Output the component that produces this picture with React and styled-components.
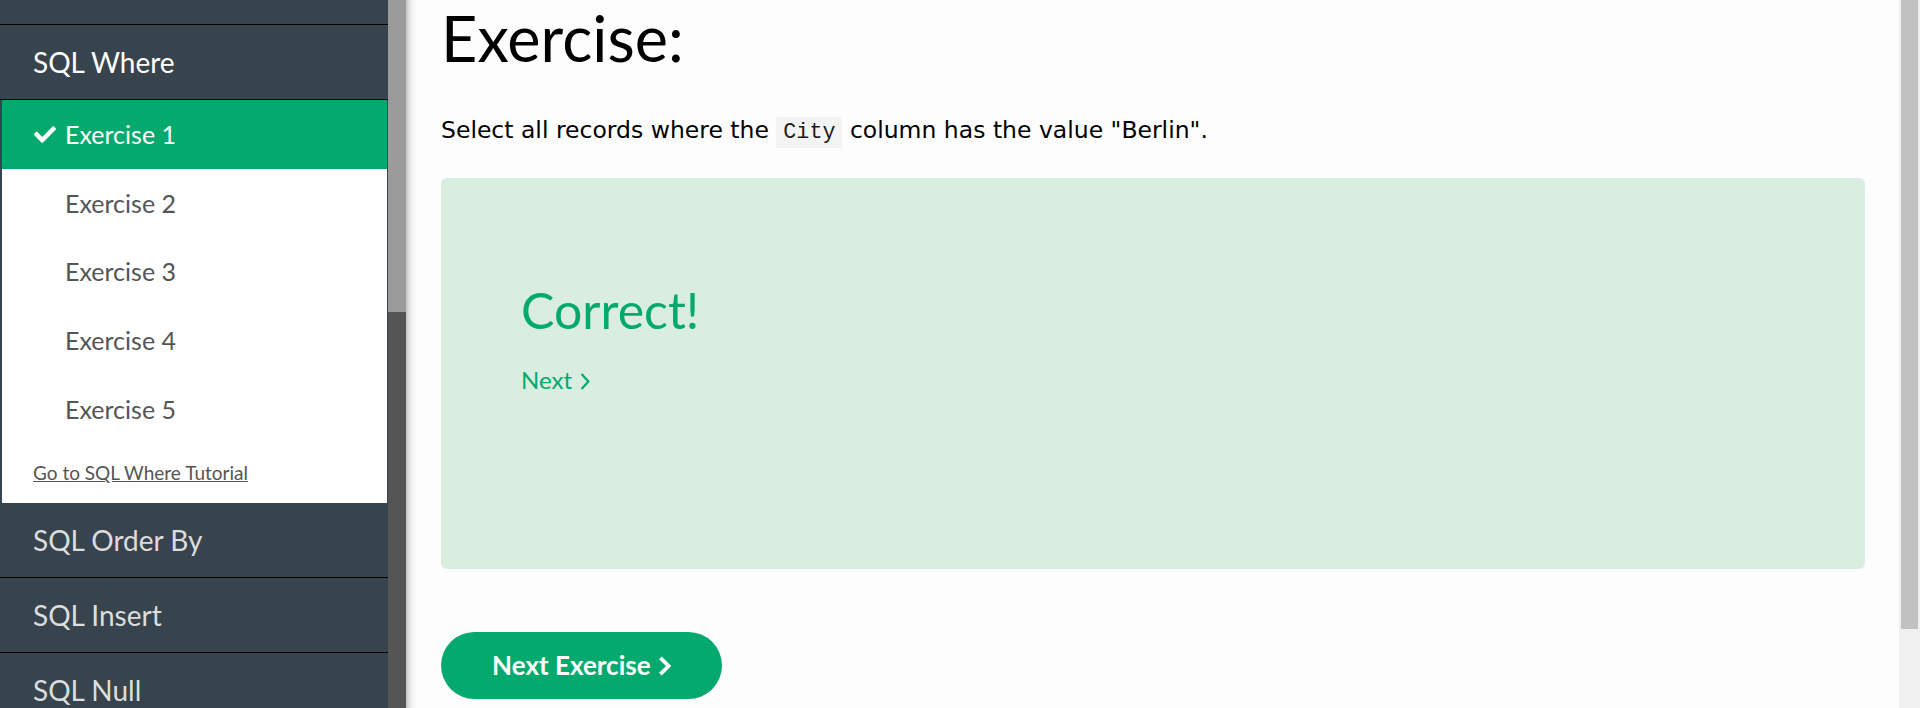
import React from "react";
import styled, { createGlobalStyle } from "styled-components";
import { FaCheck } from "react-icons/fa";

const GlobalStyle = createGlobalStyle`
  html, body {
    margin: 0;
    padding: 0;
    height: 100%;
    overflow: hidden;
  }
  #root {
    height: 100%;
  }
`;

const topicsAfter = ["SQL Order By", "SQL Insert", "SQL Null"];
const exercises = [1, 2, 3, 4, 5];

const Chevron = ({ width, height, stroke, gap }) => (
  <ChevronSvg
    $gap={gap}
    width={width}
    height={height}
    viewBox={`0 0 ${width} ${height}`}
  >
    <polyline
      points={`${stroke / 2 + 0.5},${stroke / 2} ${width - stroke / 2 - 0.5},${height / 2} ${stroke / 2 + 0.5},${height - stroke / 2}`}
      fill="none"
      stroke="currentColor"
      strokeWidth={stroke}
    />
  </ChevronSvg>
);

const App = () => {
  return (
    <Page>
      <GlobalStyle />
      <Sidebar>
        <TopicList>
          {/* row above, scrolled out of view */}
          <Topic />
          <Topic $current>SQL Where</Topic>
          <Submenu>
            {exercises.map((n) => (
              <ExerciseItem key={n} $active={n === 1}>
                <IconSlot>{n === 1 && <FaCheck size={23} />}</IconSlot>
                Exercise {n}
              </ExerciseItem>
            ))}
            <TutorialLink href="#">Go to SQL Where Tutorial</TutorialLink>
          </Submenu>
          {topicsAfter.map((t) => (
            <Topic key={t}>{t}</Topic>
          ))}
        </TopicList>
      </Sidebar>
      <Scrollbar $width={18} $track="#555555" $gutter={0}>
        <ScrollThumb $height={312} $color="#9b9b9b" />
      </Scrollbar>
      <Main>
        <Heading>Exercise:</Heading>
        <Instruction>
          Select all records where the <Code>City</Code> column has the value
          "Berlin".
        </Instruction>
        <ResultBox>
          <Correct>Correct!</Correct>
          <NextLink href="#">
            Next <Chevron width={10} height={17} stroke={2.2} gap={2} />
          </NextLink>
        </ResultBox>
        <NextButton>
          Next Exercise <Chevron width={13} height={20} stroke={3.8} gap={1} />
        </NextButton>
      </Main>
      <Scrollbar $width={21} $track="#f0f0f0" $gutter={2}>
        <ScrollThumb $height={629} $color="#c1c1c1" />
      </Scrollbar>
    </Page>
  );
};

const Page = styled.div`
  display: flex;
  width: 1920px;
  height: 708px;
  overflow: hidden;
  font-family: Lato, "Open Sans", sans-serif;
`;

const Sidebar = styled.nav`
  flex: 0 0 388px;
  background: #38444d;
  overflow: hidden;
`;

/* the menu is scrolled down a little */
const TopicList = styled.div`
  margin-top: -50px;
`;

const Topic = styled.div`
  height: 74px;
  line-height: 74px;
  padding-left: 33px;
  border-bottom: 1px solid #000;
  font-size: 28px;
  color: ${(p) => (p.$current ? "#ffffff" : "#dddddd")};
  white-space: nowrap;
`;

const Submenu = styled.div`
  background: #fff;
  margin: 0 1px 0 2px;
`;

const ExerciseItem = styled.div`
  display: flex;
  align-items: center;
  gap: 9px;
  height: 68.6px;
  padding-left: 32px;
  font-size: 25px;
  background: ${(p) => (p.$active ? "#04aa6d" : "transparent")};
  color: ${(p) => (p.$active ? "#ffffff" : "#555555")};
`;

const IconSlot = styled.span`
  display: flex;
  align-items: center;
  width: 22px;
`;

const TutorialLink = styled.a`
  display: block;
  padding: 18px 0 18px 31px;
  line-height: 24px;
  font-size: 19px;
  color: #555;
  text-decoration: underline;
`;

const Scrollbar = styled.div`
  flex: 0 0 ${(p) => p.$width}px;
  display: flex;
  flex-direction: column;
  box-sizing: border-box;
  padding: 0 ${(p) => p.$gutter}px;
  background: ${(p) => p.$track};
`;

const ScrollThumb = styled.div`
  height: ${(p) => p.$height}px;
  background: ${(p) => p.$color};
`;

const Main = styled.main`
  flex: 1;
  min-width: 0;
  box-sizing: border-box;
  padding: 0 34px 0 35px;
  background: linear-gradient(
      to right,
      rgba(0, 0, 0, 0.22),
      rgba(0, 0, 0, 0.06) 5px,
      rgba(0, 0, 0, 0) 11px
    ),
    #fdfdfd;
  overflow: hidden;
`;

const Heading = styled.h2`
  margin: 0;
  padding-top: 1px;
  font-size: 63px;
  font-weight: 400;
  line-height: 73px;
  color: #000;
`;

const Instruction = styled.p`
  margin: 39px 0 0;
  font-family: "DejaVu Sans", Verdana, sans-serif;
  font-size: 23.5px;
  line-height: 35px;
  color: #000;
`;

const Code = styled.code`
  font-family: "Liberation Mono", "DejaVu Sans Mono", monospace;
  font-size: 21.7px;
  line-height: 1;
  padding: 3px 7px;
  background: #f3f3f3;
  color: #1b1b1b;
`;

const ResultBox = styled.div`
  margin-top: 30px;
  padding: 101px 80px 174px;
  background: #d9eee1;
  border-radius: 6px;
`;

const Correct = styled.h3`
  margin: 0;
  font-size: 50px;
  font-weight: 400;
  line-height: 62px;
  color: #04aa6d;
`;

const NextLink = styled.a`
  display: inline-block;
  margin-top: 24px;
  font-size: 24px;
  line-height: 30px;
  color: #04aa6d;
  text-decoration: none;
`;

const ChevronSvg = styled.svg`
  display: inline-block;
  vertical-align: -1px;
  margin-left: ${(p) => p.$gap}px;
`;

const NextButton = styled.button`
  display: block;
  margin-top: 63px;
  width: 281px;
  height: 67px;
  border: none;
  border-radius: 34px;
  background: #04aa6d;
  color: #fff;
  font-family: Lato, "Open Sans", sans-serif;
  font-size: 26px;
  font-weight: 700;
  line-height: 67px;
  padding: 0;
  cursor: pointer;
`;

export default App;
